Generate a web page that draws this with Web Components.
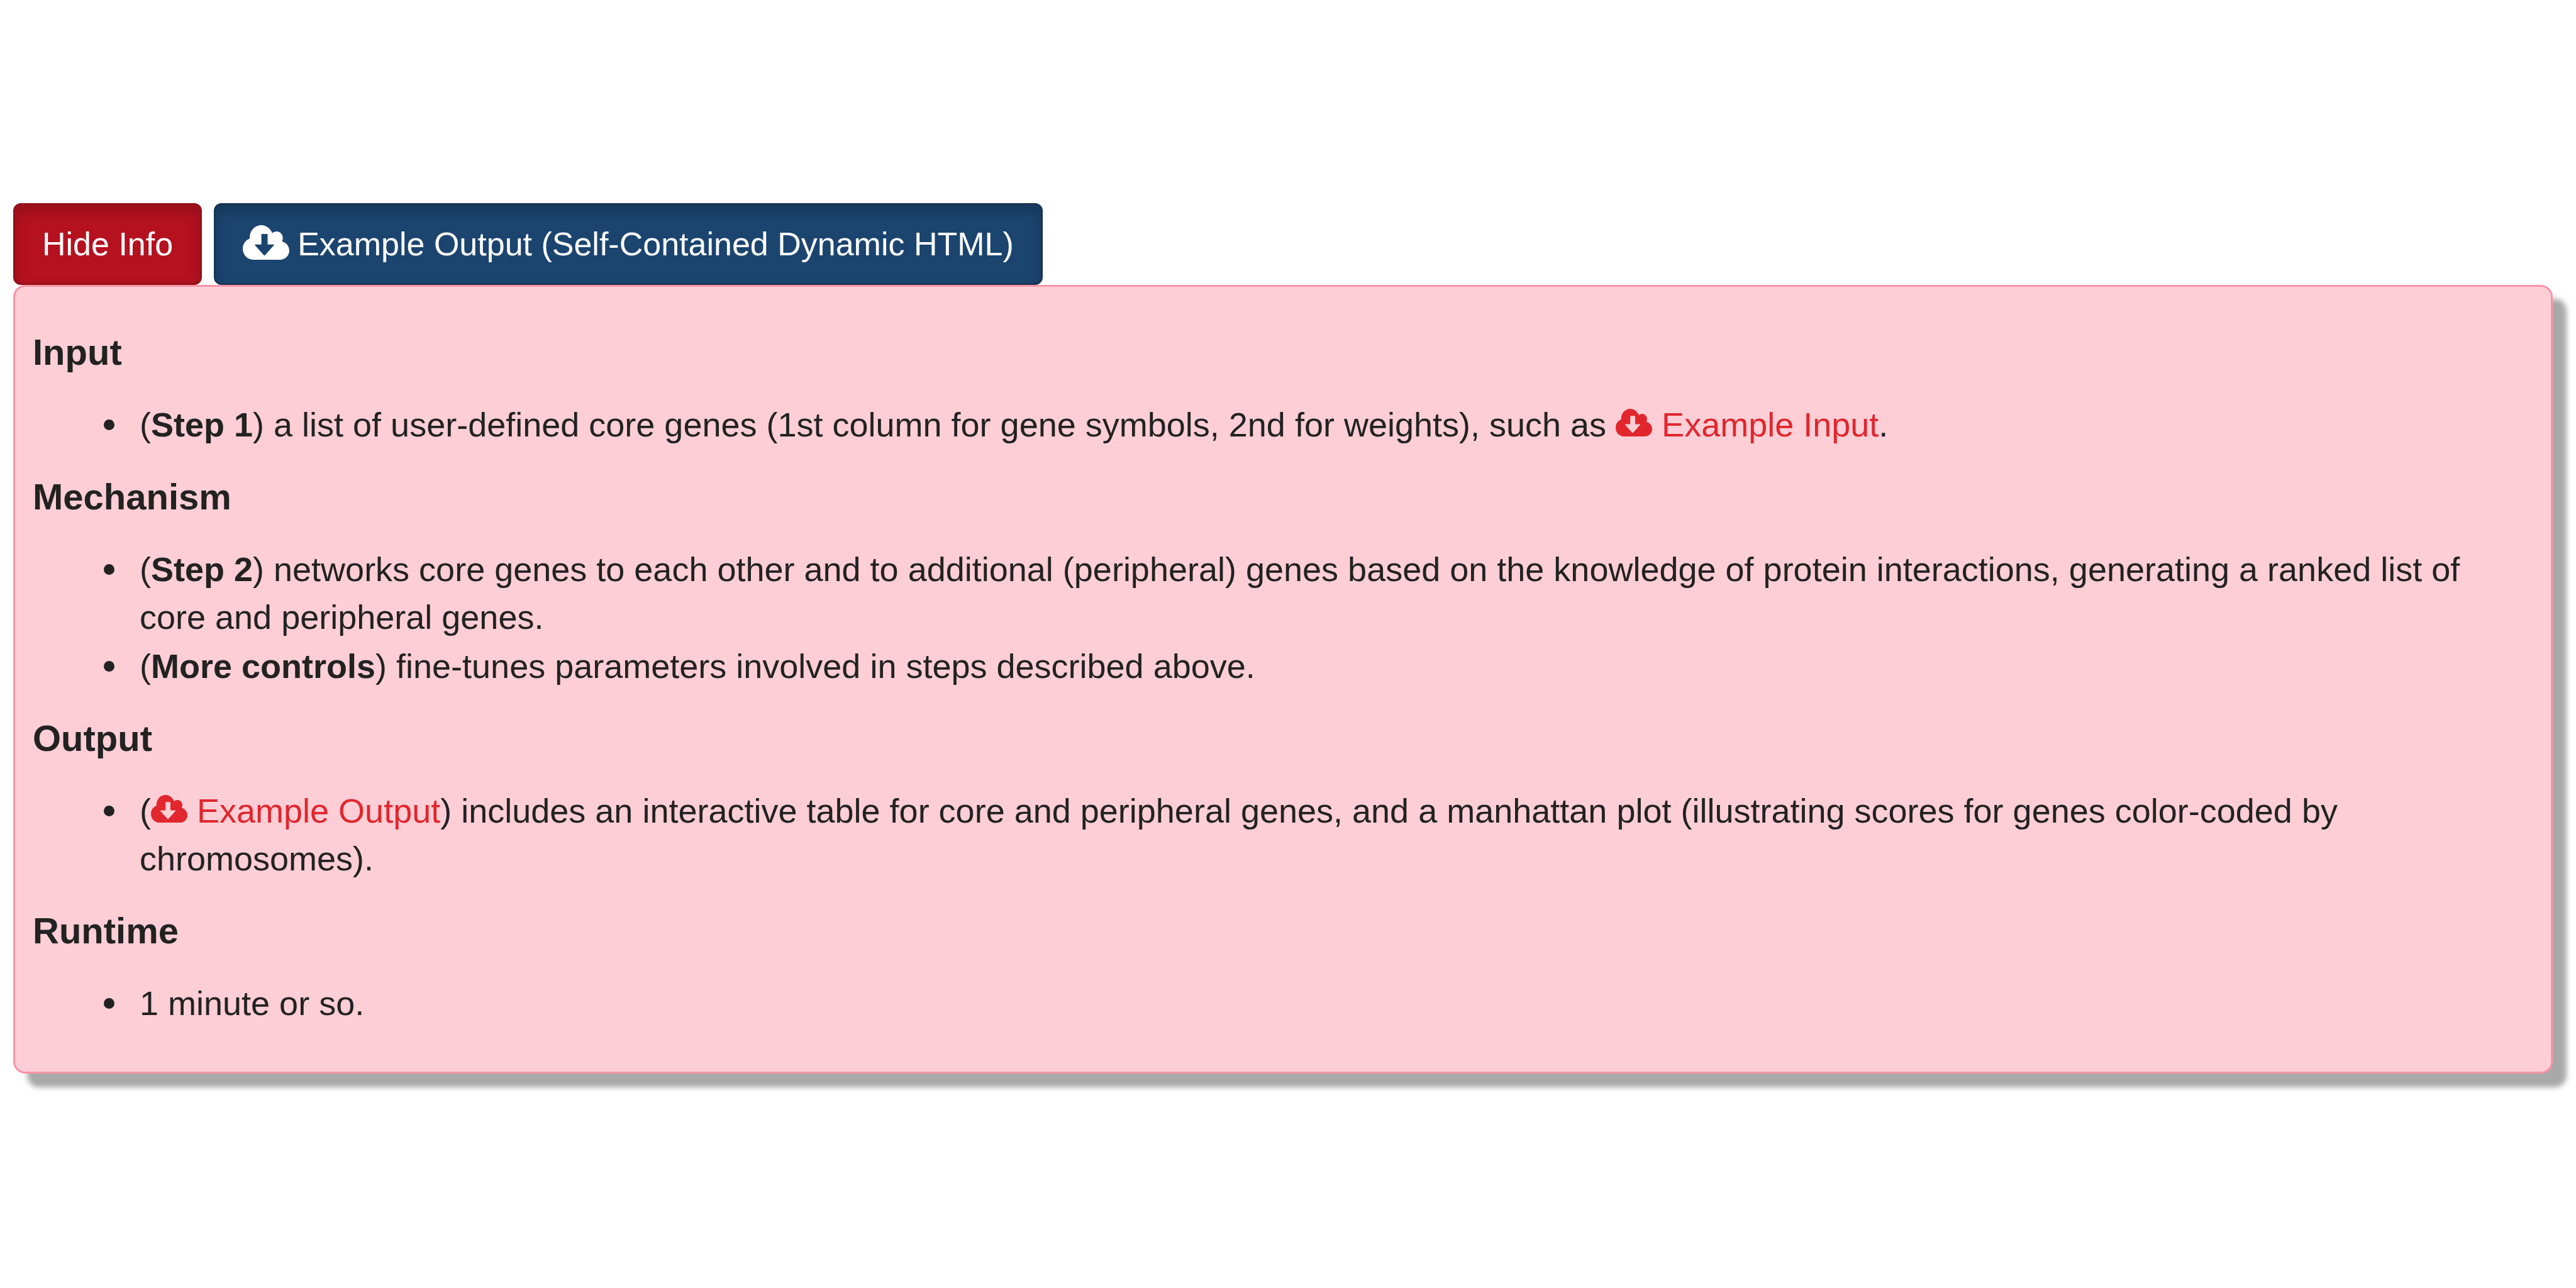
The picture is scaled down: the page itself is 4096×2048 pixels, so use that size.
<!DOCTYPE html>
<html lang="en">
<head>
<meta charset="utf-8">
<title>Core gene networking</title>
<style>
  html, body { margin: 0; background: #fff; }
  body { font-family: "Liberation Sans", Arial, sans-serif; font-size: 54px; line-height: 76px; color: #222; }
</style>
</head>
<body>
<gene-page>
  <action-button slot="actions" tone="danger">Hide Info</action-button>
  <action-button slot="actions" tone="primary" icon>Example Output (Self-Contained Dynamic HTML)</action-button>
  <info-section heading="Input">
    <info-item>(<b>Step 1</b>) a list of user-defined core genes (1st column for gene symbols, 2nd for weights), such as <download-link>Example Input</download-link>.</info-item>
  </info-section>
  <info-section heading="Mechanism">
    <info-item>(<b>Step 2</b>) networks core genes to each other and to additional (peripheral) genes based on the knowledge of protein interactions, generating a ranked list of core and peripheral genes.</info-item>
    <info-item>(<b>More controls</b>) fine-tunes parameters involved in steps described above.</info-item>
  </info-section>
  <info-section heading="Output">
    <info-item>(<download-link>Example Output</download-link>) includes an interactive table for core and peripheral genes, and a manhattan plot (illustrating scores for genes color-coded by chromosomes).</info-item>
  </info-section>
  <info-section heading="Runtime">
    <info-item>1 minute or so.</info-item>
  </info-section>
</gene-page>
<script>
  const define = (name, css, html, setup) => customElements.define(name, class extends HTMLElement {
    constructor() {
      super();
      this.attachShadow({ mode: 'open' }).innerHTML = '<style>' + css + '</style>' + html;
    }
    connectedCallback() { if (setup) setup(this, this.shadowRoot); }
  });

  define('cloud-icon', `
      :host { display: inline-block; width: 58px; height: 44px; }
      svg { display: block; width: 100%; height: 100%; fill: currentColor; }`,
    `<svg viewBox="0 32 640 448" preserveAspectRatio="none" aria-hidden="true"><path fill-rule="evenodd" d="M541 244c4-10 10-30 10-46 0-46-38-84-86-84-20 0-42 8-58 22C380 72 318 32 256 32c-88 0-160 72-160 160v14C40 228 0 276 0 338c0 79 64 142 144 142h368c71 0 128-53 128-118 0-57-42-106-99-118zM262 146h74q6 0 6 6v130h80q14 0 6 11L306 420q-8 8-16 0L168 293q-8-11 6-11h82V152q0-6 6-6z"/></svg>`);

  define('download-link', `
      :host { display: inline; }
      a { color: #e1262d; text-decoration: none; }
      cloud-icon { vertical-align: baseline; }`,
    `<a href="#download"><cloud-icon></cloud-icon> <slot></slot></a>`);

  define('action-button', `
      :host { display: block; }
      button {
        display: flex; align-items: center; gap: 13px;
        font: inherit; font-size: 52px; color: #fff; padding: 24px 43px; margin: 0;
        border: 3px solid #94101a; border-radius: 12px; background: #b5111f;
        box-shadow: inset 0 11px 19px rgba(0, 0, 0, .17);
      }
      :host([tone="primary"]) button { background: #1b446f; border-color: #183555; }
      cloud-icon { display: none; width: 74px; height: 55px; margin-bottom: 6px; }
      :host([icon]) cloud-icon { display: block; }`,
    `<button type="button"><cloud-icon></cloud-icon><span><slot></slot></span></button>`);

  define('info-item', `
      :host { display: flex; align-items: flex-start; gap: 40px; }
      :host(:not(:first-child)) { margin-top: 2px; }
      i { flex: none; width: 17px; height: 17px; margin-top: 30px; border-radius: 50%; background: currentColor; }
      div { flex: 1; }`,
    `<i></i><div><slot></slot></div>`,
    host => host.setAttribute('role', 'listitem'));

  define('info-section', `
      :host { display: block; }
      h4 { margin: 0; font-size: 58px; line-height: 64px; font-weight: bold; }
      .items { padding: 45px 38px 45px 113px; }`,
    `<h4></h4><div class="items" role="list"><slot></slot></div>`,
    (host, root) => { root.querySelector('h4').textContent = host.getAttribute('heading'); });

  define('gene-page', `
      :host { display: block; box-sizing: border-box; min-height: 100vh; padding: 323px 37px 0 21px; }
      .bar { display: flex; gap: 19px; }
      .panel {
        padding: 72px 28px 26px; border: 3px solid #fb94a6; border-radius: 19px;
        background: #fdced6; box-shadow: 22px 22px 8px #a9a9a9;
      }`,
    `<div class="bar"><slot name="actions"></slot></div><section class="panel"><slot></slot></section>`);
</script>
</body>
</html>
